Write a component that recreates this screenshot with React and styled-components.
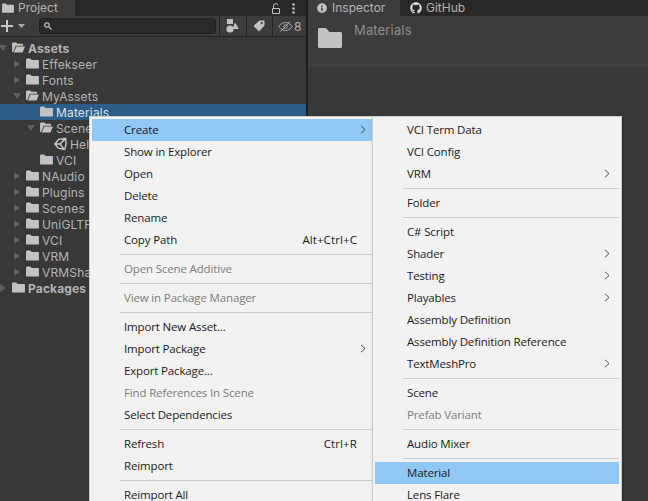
import React from 'react';
import styled, { createGlobalStyle } from 'styled-components';
import { FaGithub, FaInfoCircle } from 'react-icons/fa';

const Global = createGlobalStyle`
  html, body { margin: 0; padding: 0; background: #383838; }
  #root { width: 648px; height: 501px; }
`;

const Stage = styled.div`
  position: relative;
  width: 648px;
  height: 501px;
  overflow: hidden;
  display: grid;
  grid-template-columns: 306px 2px 1fr;
  background: #383838;
  font-family: Inter, "Liberation Sans", sans-serif;
`;

const Divider = styled.div`
  background: #1e1e1e;
`;

const Panel = styled.section`
  display: flex;
  flex-direction: column;
  min-width: 0;
  background: #383838;
`;

const TabStrip = styled.div`
  display: flex;
  align-items: stretch;
  height: 16px;
  background: #282828;
`;

const Tab = styled.div`
  display: flex;
  align-items: center;
  gap: ${p => p.$gap || 5}px;
  width: ${p => p.$width}px;
  padding-left: ${p => p.$pad}px;
  box-sizing: border-box;
  background: ${p => (p.$active ? '#3c3c3c' : 'transparent')};
  color: #b4b4b4;
  font-size: 12px;
  line-height: 16px;
  white-space: nowrap;
`;

const TabTools = styled.div`
  margin-left: auto;
  display: flex;
  align-items: center;
  gap: 11px;
  padding-right: 11px;
`;

const Toolbar = styled.div`
  display: flex;
  align-items: center;
  height: 20px;
  background: #3c3c3c;
  border-bottom: 1px solid #232323;
`;

const AddButton = styled.div`
  display: flex;
  align-items: center;
  gap: 5px;
  width: 39px;
  padding-left: 1px;
  box-sizing: border-box;
`;

const SearchField = styled.div`
  display: flex;
  align-items: center;
  width: 179px;
  height: 16px;
  padding-left: 4px;
  margin-right: 3px;
  box-sizing: border-box;
  background: #2a2a2a;
  border: 1px solid #212121;
  border-radius: 3px;
`;

const ToolButton = styled.div`
  display: flex;
  align-items: center;
  justify-content: center;
  gap: 1px;
  width: ${p => p.$width}px;
  height: 100%;
  border-left: 1px solid #232323;
  color: #b4b4b4;
  font-size: 12px;
`;

const Tree = styled.div`
  display: flex;
  flex-direction: column;
  padding-top: 3px;
`;

const TreeRow = styled.div`
  position: relative;
  display: flex;
  align-items: center;
  gap: 3px;
  height: 16px;
  padding-left: ${p => p.$level * 14 + 12}px;
  background: ${p => (p.$selected ? '#2c5d87' : 'transparent')};
  color: ${p => (p.$selected ? '#d8e4ee' : '#b4b4b4')};
  font-size: 12px;
  font-weight: ${p => (p.$bold ? 700 : 400)};
  letter-spacing: 0.15px;
  white-space: nowrap;
`;

const Twisty = styled.svg`
  position: absolute;
  left: ${p => p.$level * 14 - 1}px;
  top: 4px;
  width: 8px;
  height: 8px;
`;

const InspectorHeader = styled.div`
  display: flex;
  gap: 12px;
  height: 46px;
  padding: 12px 0 0 10px;
  box-sizing: border-box;
  background: #3c3c3c;
`;

const HeaderTitle = styled.div`
  color: #8c8c8c;
  font-size: 13px;
  letter-spacing: 0.15px;
  line-height: 16px;
  margin-top: -6px;
`;

const HeaderRule = styled.div`
  height: 4px;
  margin-top: 1px;
  background: #404040;
`;

const Menu = styled.div`
  position: absolute;
  top: 116px;
  left: ${p => p.$left}px;
  width: ${p => p.$width}px;
  box-sizing: border-box;
  padding: 2px;
  background: #f2f2f2;
  border: 1px solid #cfcfcf;
  box-shadow: 1px 1px 3px rgba(0, 0, 0, 0.25);
  font-family: "Open Sans", "Liberation Sans", sans-serif;
  font-size: 11.5px;
  letter-spacing: -0.15px;
`;

const MenuRow = styled.div`
  display: grid;
  grid-template-columns: 1fr auto 18px;
  align-items: center;
  height: 22px;
  box-sizing: border-box;
  padding: 0 0 2px 32px;
  background: ${p => (p.$highlight ? '#90c8f6' : 'transparent')};
  color: ${p => (p.$disabled ? '#7d7d7d' : '#1a1a1a')};
  white-space: nowrap;
`;

const Shortcut = styled.span`
  letter-spacing: 0.1px;
`;

const Chevron = styled.svg`
  width: 6px;
  height: 9px;
  margin-left: 3px;
`;

const MenuRule = styled.div`
  height: 1px;
  margin: 3px 0 3px 28px;
  background: #cdcdcd;
`;

const Folder = ({ open, size = 13 }) =>
  open ? (
    <svg width={size} height={size * 0.85} viewBox="0 0 14 12" fill="#c2c2c2" style={{ flex: 'none' }}>
      <path d="M0 1.5C0 .9.4.5 1 .5h3.5L6 2h5c.6 0 1 .4 1 1v1H4L1.2 11 0 10.5zM4.6 5H14l-2.6 6.5H2z" />
    </svg>
  ) : (
    <svg width={size} height={size * 0.85} viewBox="0 0 14 12" fill="#c2c2c2" style={{ flex: 'none' }}>
      <path d="M0 1.5C0 .9.4.5 1 .5h3.5L6 2.2h7c.6 0 1 .4 1 1v7.3c0 .6-.4 1-1 1H1c-.6 0-1-.4-1-1z" />
    </svg>
  );

const UnityIcon = () => (
  <svg width="13" height="14" viewBox="0 0 14 14" fill="none" stroke="#d0d0d0" strokeWidth="1.4" style={{ flex: 'none' }}>
    <path d="M1 7l4-5 7.500-1 .5 6-1.500 6-7-1.500zM1 7h5.500l6-6M6.500 7l4.500 6" />
  </svg>
);

const tree = [
  { label: 'Assets', level: 0, twisty: 'down', open: true, bold: true },
  { label: 'Effekseer', level: 1, twisty: 'right' },
  { label: 'Fonts', level: 1, twisty: 'right' },
  { label: 'MyAssets', level: 1, twisty: 'down', open: true },
  { label: 'Materials', level: 2, selected: true },
  { label: 'Scene', level: 2, twisty: 'down', open: true },
  { label: 'Hel', level: 3, unity: true },
  { label: 'VCI', level: 2 },
  { label: 'NAudio', level: 1, twisty: 'right' },
  { label: 'Plugins', level: 1, twisty: 'right' },
  { label: 'Scenes', level: 1, twisty: 'right' },
  { label: 'UniGLTF', level: 1, twisty: 'right' },
  { label: 'VCI', level: 1, twisty: 'right' },
  { label: 'VRM', level: 1, twisty: 'right' },
  { label: 'VRMSha', level: 1, twisty: 'right' },
  { label: 'Packages', level: 0, twisty: 'right', bold: true },
];

const mainMenu = [
  { t: 'Create', hi: true, sub: true },
  { t: 'Show in Explorer' },
  { t: 'Open' },
  { t: 'Delete' },
  { t: 'Rename' },
  { t: 'Copy Path', key: 'Alt+Ctrl+C' },
  'rule',
  { t: 'Open Scene Additive', off: true },
  'rule',
  { t: 'View in Package Manager', off: true },
  'rule',
  { t: 'Import New Asset...' },
  { t: 'Import Package', sub: true },
  { t: 'Export Package...' },
  { t: 'Find References In Scene', off: true },
  { t: 'Select Dependencies' },
  'rule',
  { t: 'Refresh', key: 'Ctrl+R' },
  { t: 'Reimport' },
  'rule',
  { t: 'Reimport All' },
];

const createMenu = [
  { t: 'VCI Term Data' },
  { t: 'VCI Config' },
  { t: 'VRM', sub: true },
  'rule',
  { t: 'Folder' },
  'rule',
  { t: 'C# Script' },
  { t: 'Shader', sub: true },
  { t: 'Testing', sub: true },
  { t: 'Playables', sub: true },
  { t: 'Assembly Definition' },
  { t: 'Assembly Definition Reference' },
  { t: 'TextMeshPro', sub: true },
  'rule',
  { t: 'Scene' },
  { t: 'Prefab Variant', off: true },
  'rule',
  { t: 'Audio Mixer' },
  'rule',
  { t: 'Material', hi: true },
  { t: 'Lens Flare' },
];

const MenuList = ({ items, left, width }) => (
  <Menu $left={left} $width={width}>
    {items.map((it, i) =>
      it === 'rule' ? (
        <MenuRule key={i} />
      ) : (
        <MenuRow key={i} $highlight={it.hi} $disabled={it.off}>
          <span>{it.t}</span>
          <Shortcut>{it.key}</Shortcut>
          {it.sub ? (
            <Chevron viewBox="0 0 6 9" fill="none" stroke="#4a4a4a" strokeWidth="1">
              <path d="M1 .8L5 4.5 1 8.2" />
            </Chevron>
          ) : (
            <span />
          )}
        </MenuRow>
      )
    )}
  </Menu>
);

export default function App() {
  return (
    <Stage>
      <Global />
      <Panel>
        <TabStrip>
          <Tab $active $width={75} $pad={2} $gap={4}>
            <Folder size={12} />
            Project
          </Tab>
          <TabTools>
            <svg width="9" height="11" viewBox="0 0 9 11" fill="none" stroke="#c2c2c2" strokeWidth="1">
              <path d="M.5 5.5h7v5h-7zM1.5 5.5V3a2.2 2.2 0 0 1 4.3-.8" />
            </svg>
            <svg width="3" height="11" viewBox="0 0 3 11" fill="#c2c2c2">
              <circle cx="1.5" cy="1.5" r="1.3" />
              <circle cx="1.5" cy="5.5" r="1.3" />
              <circle cx="1.5" cy="9.5" r="1.3" />
            </svg>
          </TabTools>
        </TabStrip>
        <Toolbar>
          <AddButton>
            <svg width="12" height="12" viewBox="0 0 12 12" fill="#c8c8c8">
              <path d="M5 0h2v5h5v2H7v5H5V7H0V5h5z" />
            </svg>
            <svg width="7" height="4" viewBox="0 0 7 4" fill="#a8a8a8">
              <path d="M0 0h7L3.500 4z" />
            </svg>
          </AddButton>
          <SearchField>
            <svg width="8" height="8" viewBox="0 0 8 8" fill="none" stroke="#c2c2c2" strokeWidth="1.2">
              <circle cx="3" cy="3" r="2.2" />
              <path d="M4.8 4.8L7.5 7.5" />
            </svg>
          </SearchField>
          <ToolButton $width={26}>
            <svg width="13" height="14" viewBox="0 0 13 14" fill="#c2c2c2">
              <path d="M1 0h6v5H1z" />
              <circle cx="4" cy="10" r="3.6" />
              <path d="M9 3.5l4 6.5H6.5z" />
            </svg>
          </ToolButton>
          <ToolButton $width={26}>
            <svg width="12" height="12" viewBox="0 0 12 12" fill="#c2c2c2">
              <path d="M6.5.5H11c.3 0 .5.2.5.5v4.5L6 11.5.5 6zM8.700 2a1 1 0 1 0 .01 0z" fillRule="evenodd" />
            </svg>
          </ToolButton>
          <ToolButton $width={33}>
            <svg width="15" height="11" viewBox="0 0 15 11" fill="none" stroke="#a8a8a8" strokeWidth="1">
              <path d="M.8 5.500C3 2.500 5 1.500 7.500 1.500s4.500 1 6.700 4c-2.200 3-4.200 4-6.700 4S3 8.500.8 5.500zM12 .5L2.500 10.500" />
              <circle cx="7.500" cy="5.500" r="1.800" />
            </svg>
            8
          </ToolButton>
        </Toolbar>
        <Tree>
          {tree.map((r, i) => (
            <TreeRow key={i} $level={r.level} $selected={r.selected} $bold={r.bold}>
              {r.twisty && (
                <Twisty $level={r.level} viewBox="0 0 8 8" fill="#5e5e5e">
                  <path d={r.twisty === 'down' ? 'M0 1h8L4 7z' : 'M1 0l6 4-6 4z'} />
                </Twisty>
              )}
              {r.unity ? <UnityIcon /> : <Folder open={r.open} />}
              {r.label}
            </TreeRow>
          ))}
        </Tree>
      </Panel>
      <Divider />
      <Panel>
        <TabStrip>
          <Tab $active $width={92} $pad={9}>
            <FaInfoCircle size={10} color="#c2c2c2" />
            Inspector
          </Tab>
          <Tab $width={70} $pad={10} $gap={4}>
            <FaGithub size={12} color="#d8d8d8" />
            GitHub
          </Tab>
        </TabStrip>
        <InspectorHeader>
          <svg width="24" height="20" viewBox="0 0 24 20" fill="#c2c2c2" style={{ flex: 'none' }}>
            <path d="M0 1.500C0 .7.700 0 1.500 0H8l3.500 4h11c.8 0 1.500.7 1.500 1.500v13c0 .8-.7 1.500-1.500 1.500h-21C.7 20 0 19.300 0 18.500z" />
          </svg>
          <HeaderTitle>Materials</HeaderTitle>
        </InspectorHeader>
        <HeaderRule />
      </Panel>
      <MenuList items={mainMenu} left={89} width={289} />
      <MenuList items={createMenu} left={372} width={250} />
    </Stage>
  );
}
